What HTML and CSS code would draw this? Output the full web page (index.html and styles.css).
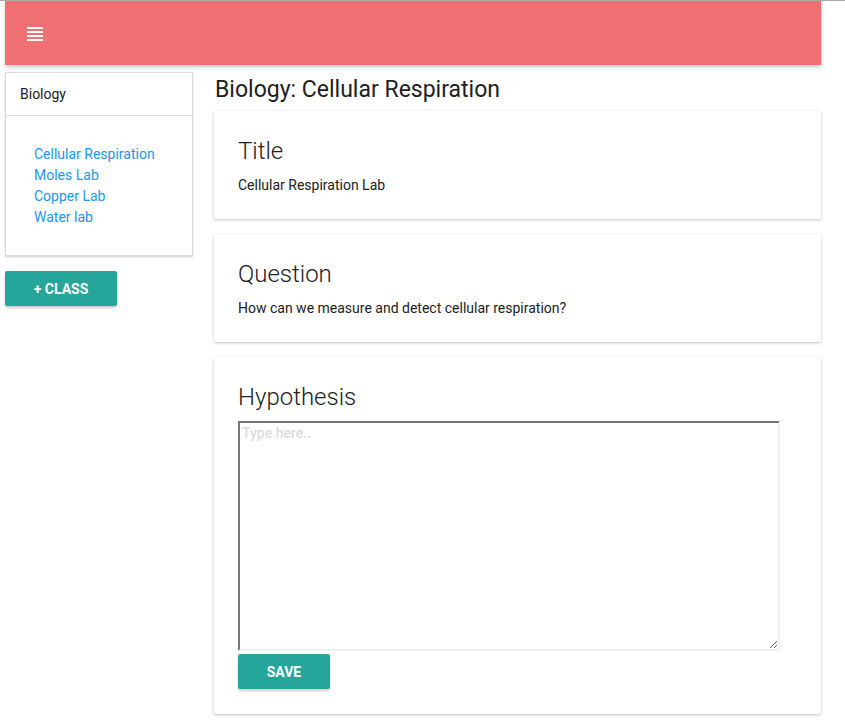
FILE: index.html
```html
<!DOCTYPE html>
<html>
<head>
<meta charset="utf-8">
<link rel="stylesheet" href="styles.css">
</head>
<body>
<div class="app">
  <nav class="navbar">
    <span class="menu-icon">
      <svg width="16" height="14" viewBox="0 0 16 14"><rect x="0" y="0" width="16" height="2" fill="#fff"/><rect x="0" y="4" width="16" height="2" fill="#fff"/><rect x="0" y="8" width="16" height="2" fill="#fff"/><rect x="0" y="12" width="16" height="2" fill="#fff"/></svg>
    </span>
  </nav>
  <div class="layout">
    <aside class="sidebar">
      <div class="class-card">
        <div class="class-head">Biology</div>
        <ul class="lab-list">
          <li><a href="#">Cellular Respiration</a></li>
          <li><a href="#">Moles Lab</a></li>
          <li><a href="#">Copper Lab</a></li>
          <li><a href="#">Water lab</a></li>
        </ul>
      </div>
      <button class="btn btn-class">+ Class</button>
    </aside>
    <main class="main">
      <h2 class="page-title">Biology: Cellular Respiration</h2>
      <section class="card">
        <h3 class="card-title">Title</h3>
        <p class="card-text">Cellular Respiration Lab</p>
      </section>
      <section class="card">
        <h3 class="card-title">Question</h3>
        <p class="card-text">How can we measure and detect cellular respiration?</p>
      </section>
      <section class="card">
        <h3 class="card-title">Hypothesis</h3>
        <textarea class="answer" placeholder="Type here.."></textarea>
        <div class="actions"><button class="btn btn-save">Save</button></div>
      </section>
    </main>
  </div>
</div>
</body>
</html>
```
FILE: styles.css
```css
html, body {
  margin: 0;
  padding: 0;
  background: #fff;
}
body {
  border-top: 1px solid #a9a9a9;
  font-family: Roboto, "Liberation Sans", sans-serif;
  color: #212121;
  font-size: 14px;
}
.app {
  width: 816px;
  padding-left: 5px;
}
.navbar {
  height: 64px;
  background: #ef6f73;
  box-shadow: 0 2px 4px rgba(0,0,0,0.22);
  display: flex;
  align-items: center;
  padding-left: 22px;
}
.menu-icon {
  display: flex;
  margin-top: 1px;
}
.layout {
  display: flex;
  gap: 22px;
  margin-top: 7px;
  align-items: flex-start;
}
.sidebar {
  width: 188px;
  flex: none;
}
.class-card {
  border: 1px solid #ddd;
  box-shadow: 0 1px 2px rgba(0,0,0,0.2);
  background: #fff;
}
.class-head {
  height: 42px;
  line-height: 42px;
  padding: 0 14px;
  border-bottom: 1px solid #ddd;
  font-size: 14px;
  color: #212121;
}
.lab-list {
  list-style: none;
  margin: 0;
  padding: 28px 0 27px 28px;
  line-height: 21px;
}
.lab-list a {
  color: #2196f3;
  text-decoration: none;
  font-size: 14px;
}
.btn {
  border: none;
  border-radius: 2px;
  background: #26a69a;
  color: #fff;
  font-family: Roboto, "Liberation Sans", sans-serif;
  font-weight: 700;
  font-size: 14px;
  text-transform: uppercase;
  box-shadow: 0 2px 3px rgba(0,0,0,0.2);
  padding: 0;
}
.btn-class {
  display: block;
  width: 112px;
  height: 35px;
  margin-top: 15px;
}
.main {
  width: 607px;
  flex: none;
  margin-left: -1px;
}
.page-title {
  margin: 2px 0 6px 1px;
  font-size: 23px;
  line-height: 31px;
  font-weight: 400;
  color: #212121;
}
.card {
  background: #fff;
  box-shadow: 0 1px 3px rgba(0,0,0,0.25);
  border-radius: 2px;
  padding: 24px 24px 24px 24px;
  margin-bottom: 15px;
}
.card-title {
  margin: 0;
  font-size: 24px;
  line-height: 32px;
  font-weight: 300;
  color: #212121;
}
.card-text {
  margin: 8px 0 0 0;
  line-height: 20px;
  font-size: 14px;
}
.answer {
  display: block;
  box-sizing: border-box;
  width: 542px;
  height: 230px;
  margin-top: 8px;
  border-style: solid;
  border-width: 2px;
  border-color: #767676 #f0f0f0 #f0f0f0 #767676;
  padding: 2px 2px;
  font-family: Roboto, "Liberation Sans", sans-serif;
  font-size: 14px;
  font-weight: 500;
  resize: both;
  outline: none;
}
.answer::placeholder {
  color: #dcdcdc;
}
.actions {
  margin-top: 3px;
  margin-bottom: 1px;
}
.btn-save {
  width: 92px;
  height: 35px;
}
```
